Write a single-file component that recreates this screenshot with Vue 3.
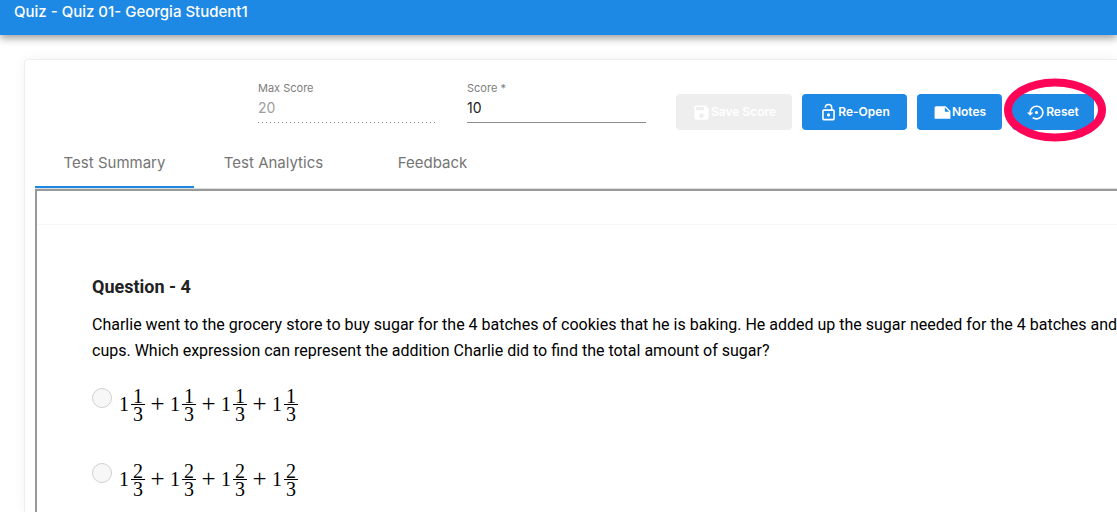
<script setup>
import { ref } from 'vue'

const maxScore = ref('20')
const score = ref('10')
const answer = ref('')
const activeTab = ref(0)
const tabs = ['Test Summary', 'Test Analytics', 'Feedback']
const options = [
  { id: 'a', whole: 1, top: 1, bottom: 3 },
  { id: 'b', whole: 1, top: 2, bottom: 3 },
]
</script>

<template>
  <div class="page">
    <header class="bar">
      <h1 class="title">Quiz - Quiz 01- Georgia Student1</h1>
    </header>
    <main class="card">
      <div class="toolbar">
        <div class="field disabled">
          <label for="max-score">Max Score</label>
          <input id="max-score" v-model="maxScore" type="text" disabled />
        </div>
        <div class="field">
          <label for="score">Score *</label>
          <input id="score" v-model="score" type="text" required />
        </div>
        <div class="actions">
          <button class="btn save" type="button" disabled>
            <svg viewBox="0 0 24 24"><path fill-rule="evenodd" d="M17 3H5a2 2 0 0 0-2 2v14a2 2 0 0 0 2 2h14c1.100 0 2-.9 2-2V7l-4-4zm-5 16a3 3 0 1 1 0-6 3 3 0 0 1 0 6zm3-10H5V5h10v4z" /></svg>
            <span>Save Score</span>
          </button>
          <button class="btn reopen" type="button">
            <svg viewBox="0 0 24 24"><path fill-rule="evenodd" d="M12 17a2 2 0 1 0 0-4 2 2 0 0 0 0 4zm6-9h-1V6A5 5 0 0 0 7 6h1.900a3.100 3.100 0 0 1 6.200 0v2H6a2 2 0 0 0-2 2v10a2 2 0 0 0 2 2h12a2 2 0 0 0 2-2V10a2 2 0 0 0-2-2zm0 12H6V10h12v10z" /></svg>
            <span>Re-Open</span>
          </button>
          <button class="btn notes" type="button">
            <svg viewBox="0 0 24 24"><path fill-rule="evenodd" d="M16 4H4a2 2 0 0 0-2 2v14h20V10l-6-6zm-1 7V5.500l5.500 5.500H15z" /></svg>
            <span>Notes</span>
          </button>
          <div class="marked">
            <button class="btn reset" type="button">
              <svg viewBox="0 0 24 24"><path d="M14 12a2 2 0 1 0-4 0 2 2 0 0 0 4 0zm-2-9a9 9 0 0 0-9 9H0l4 4 4-4H5a7 7 0 1 1 2.940 5.700l-1.420 1.440A9 9 0 1 0 12 3z" /></svg>
              <span>Reset</span>
            </button>
            <svg class="ring" viewBox="0 0 102 64" aria-hidden="true"><ellipse cx="51" cy="32" rx="47" ry="27.500" /></svg>
          </div>
        </div>
      </div>

      <nav class="tabs" role="tablist">
        <button
          v-for="(tab, i) in tabs"
          :key="tab"
          class="tab"
          :class="{ active: i === activeTab }"
          type="button"
          role="tab"
          :aria-selected="i === activeTab"
          @click="activeTab = i"
        >{{ tab }}</button>
      </nav>

      <section class="frame">
        <div class="sheet">
          <h2>Question - 4</h2>
          <p class="prompt">
            Charlie went to the grocery store to buy sugar for the 4 batches of cookies that he is baking. He added up the sugar needed for the 4 batches and<br />
            cups. Which expression can represent the addition Charlie did to find the total amount of sugar?
          </p>
          <label v-for="o in options" :key="o.id" class="option">
            <input v-model="answer" type="radio" name="answer" :value="o.id" />
            <span class="math">
              <template v-for="n in 4" :key="n">
                <span v-if="n > 1" class="plus">+</span>
                <span>{{ o.whole }}</span>
                <span class="frac">
                  <span class="num">{{ o.top }}</span>
                  <span class="den">{{ o.bottom }}</span>
                </span>
              </template>
            </span>
          </label>
        </div>
      </section>
    </main>
  </div>
</template>

<style>
body {
  overflow: hidden;
  background: #fff;
}
</style>

<style scoped>
* {
  box-sizing: border-box;
}
.page {
  height: 100vh;
  display: flex;
  flex-direction: column;
  overflow: hidden;
  font-family: Inter, "Open Sans", sans-serif;
}
.bar {
  flex: none;
  height: 35px;
  padding-left: 14px;
  background: #1e88e5;
  box-shadow: 0 3px 8px rgba(0, 0, 0, 0.4);
}
.title {
  margin: 0;
  color: #fff;
  font-size: 15px;
  font-weight: 500;
  line-height: 24px;
}
.card {
  flex: 1;
  display: flex;
  flex-direction: column;
  min-height: 0;
  margin: 24px 0 0 24px;
  padding: 0 0 0 10px;
  border: 1px solid #eee;
  border-width: 1px 0 0 1px;
  border-radius: 4px 0 0 0;
  box-shadow: 0 0 12px rgba(0, 0, 0, 0.05);
}
.toolbar {
  flex: none;
  display: flex;
  gap: 30px;
  height: 80px;
  padding: 20px 0 0 223px;
}
.field {
  flex: 1 1 179px;
  max-width: 179px;
  display: flex;
  flex-direction: column;
  height: 43px;
  border-bottom: 1px solid #8c8c8c;
}
.field label {
  color: #7d7d7d;
  font-size: 11px;
  line-height: 17px;
}
.field input {
  width: 100%;
  height: 22px;
  padding: 0;
  border: 0;
  outline: 0;
  background: none;
  color: #212121;
  font: 14px/22px Inter, sans-serif;
}
.field.disabled {
  border-bottom: 0;
  background: repeating-linear-gradient(90deg, #8c8c8c 0 1px, transparent 1px 4px) left bottom / 100% 1px no-repeat;
}
.field.disabled input {
  color: #9e9e9e;
}
.actions {
  display: flex;
  flex: none;
  gap: 10px;
  padding-top: 14px;
}
.btn {
  display: flex;
  align-items: center;
  justify-content: center;
  height: 36px;
  padding: 0;
  border: 0;
  border-radius: 4px;
  background: #1e88e5;
  color: #fff;
  font: 600 12px/18px Inter, sans-serif;
  white-space: nowrap;
}
.btn svg {
  flex: none;
  width: 19px;
  height: 19px;
  fill: currentColor;
}
.save {
  width: 116px;
  background: #eee;
  color: #fff;
}
.reopen {
  width: 105px;
}
.notes {
  width: 85px;
}
.reset {
  width: 82px;
}
.marked {
  position: relative;
  height: 36px;
}
.ring {
  position: absolute;
  left: -8px;
  top: -16px;
  width: 102px;
  height: 64px;
  fill: none;
  stroke: #ff0558;
  stroke-width: 8px;
  pointer-events: none;
}
.tabs {
  flex: none;
  display: flex;
  height: 49px;
  border-bottom: 1px solid #ddd;
}
.tab {
  width: 159px;
  padding: 0;
  border: 0;
  border-bottom: 2px solid transparent;
  background: none;
  color: #757575;
  font: 400 15px/46px Inter, sans-serif;
}
.tab.active {
  border-bottom-color: #1e88e5;
}
.frame {
  flex: 1;
  min-height: 0;
  overflow: hidden;
  padding-top: 33px;
  border: 2px solid #999;
  border-width: 2px 0 0 2px;
}
.sheet {
  padding: 50px 0 0 55px;
  border-top: 1px solid #f7f7f7;
  color: #000;
  font-family: Roboto, sans-serif;
}
h2 {
  margin: 0;
  color: #212121;
  font-size: 18px;
  font-weight: 700;
  line-height: 24px;
}
.prompt {
  margin: 13px 0 12px;
  font-size: 16px;
  line-height: 26px;
  white-space: nowrap;
}
.option {
  display: flex;
  align-items: flex-start;
  gap: 7px;
  height: 75px;
  padding-top: 12px;
}
.option input {
  appearance: none;
  flex: none;
  width: 20px;
  height: 20px;
  margin: 0;
  border: 1px solid #d0d0d0;
  border-radius: 50%;
  background: #f7f7f7;
}
.math {
  display: flex;
  align-items: center;
  height: 32px;
  font: 20px/20px "Liberation Serif", serif;
}
.frac {
  display: flex;
  flex-direction: column;
  width: 14px;
  margin-left: 2px;
  text-align: center;
}
.num {
  height: 18px;
  border-bottom: 1px solid #000;
  line-height: 18px;
}
.den {
  height: 17px;
  line-height: 18px;
}
.plus {
  width: 25px;
  font-size: 25px;
  text-align: center;
}
</style>
